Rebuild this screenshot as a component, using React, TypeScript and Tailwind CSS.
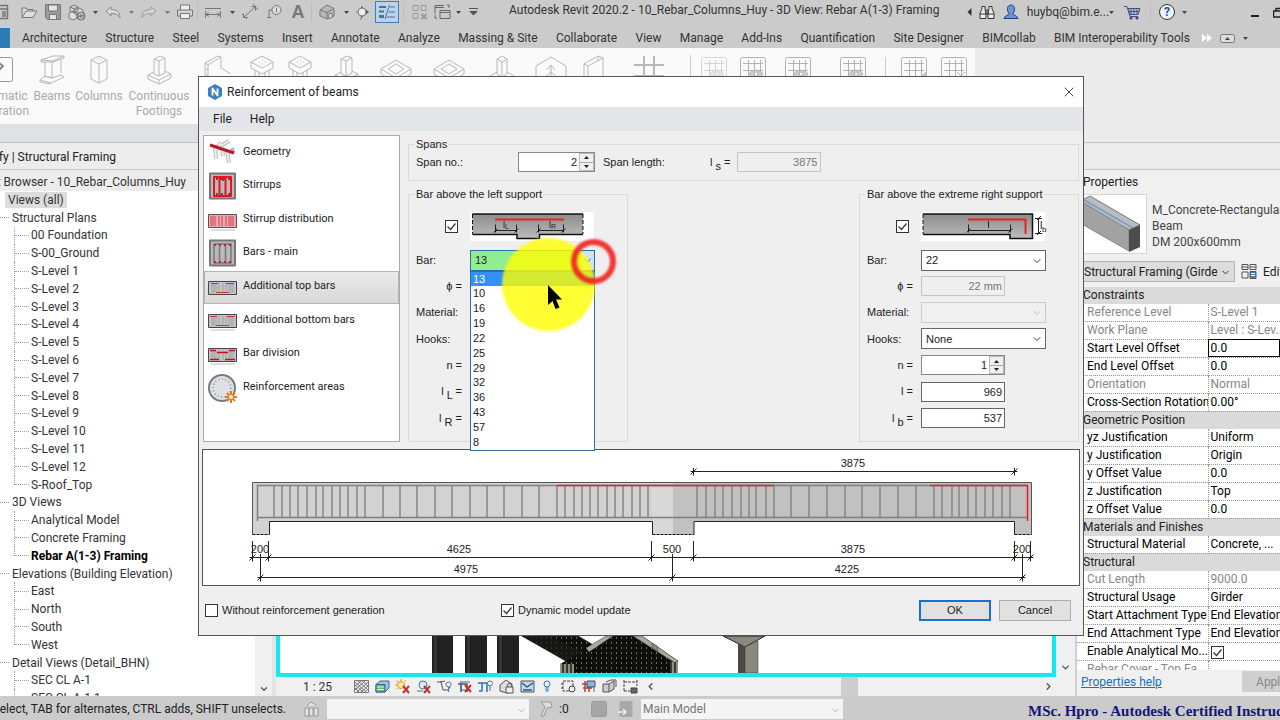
import React, { useState } from "react";
import { ChevronDown, ChevronLeft, ChevronRight, X } from "lucide-react";

type Child = { children?: React.ReactNode };

/* ---------- small shared pieces ---------- */

const Icon = ({
  w = 20,
  h = 20,
  stroke = "#777",
  children,
}: { w?: number; h?: number; stroke?: string } & Child) => (
  <svg
    width={w}
    height={h}
    viewBox={`0 0 ${w} ${h}`}
    fill="none"
    stroke={stroke}
    strokeLinejoin="round"
    className="shrink-0"
    aria-hidden="true"
  >
    {children}
  </svg>
);

const Caret = ({ className = "text-[#444]" }: { className?: string }) => (
  <svg width="5" height="3" viewBox="0 0 5 3" className={className} aria-hidden="true">
    <path d="M0 0h5L2.5 3z" fill="currentColor" />
  </svg>
);

const Slot = ({ w, label, children }: { w: string; label: string } & Child) => (
  <button aria-label={label} className={`flex h-full shrink-0 items-center justify-center ${w}`}>
    {children}
  </button>
);

const Divider = () => <span className="h-5 w-px shrink-0 bg-[#bdbdbd]" />;

/* ---------- title bar ---------- */

const TitleBar = () => (
  <header className="flex h-6 shrink-0 items-center bg-[#cbcbcb]">
    <div className="flex h-full shrink-0 items-center">
      <Slot w="w-[17px]" label="Home">
        <Icon w={17} h={16}>
          <path d="M0 1.5h7.5v13H0M0 5h7M2 8h4M2 10h4M2 12h4" strokeWidth="1.5" />
        </Icon>
      </Slot>
      <Slot w="w-6" label="Open">
        <Icon w={18} h={14}>
          <path d="M2 12V3h4l1 1.5h6V6M2 12.500 6 6h11l-4 6.500z" fill="#ddd" />
        </Icon>
      </Slot>
      <Slot w="w-6" label="Save">
        <Icon w={16} h={16}>
          <path d="M.5.5h15v15H2.500l-2-2z" fill="#9a9a9a" />
          <path d="M3.500 1h9v6h-9zM4.500 10.500h7v5h-7z" fill="#e4e4e4" />
        </Icon>
      </Slot>
      <Slot w="w-6" label="Synchronize">
        <Icon w={18} h={17} stroke="#777">
          <path d="m6 1 4 2v4L6 9 2 7V3zM2 3l4 2 4-2M6 5v4M5 7l4 2v5l-4 2-4-2V9zM11 4l4 2v4l-4 2-4-2V6z" fill="#ddd" />
          <circle cx="13" cy="12" r="4" fill="#888" />
          <path d="M11 11.500a2 2 0 0 1 4-.5M15 12.500a2 2 0 0 1-4 .5" stroke="#ddd" />
        </Icon>
      </Slot>
      <Slot w="w-3" label="Synchronize options"><Caret /></Slot>
      <Slot w="w-6" label="Undo">
        <Icon w={16} h={13} stroke="#888">
          <path d="M1 5 6 .8V3.500c5 0 9 2 9 8-2-3-4.500-4-9-4v2.500z" fill="#dadada" />
        </Icon>
      </Slot>
      <Slot w="w-3" label="Undo options"><Caret className="text-[#777]" /></Slot>
      <Slot w="w-6" label="Redo">
        <Icon w={16} h={13} stroke="#999">
          <path d="m15 5-5-4.200v2.700c-5 0-9 2-9 8 2-3 4.500-4 9-4v2.500z" fill="#d4d4d4" />
        </Icon>
      </Slot>
      <Slot w="w-3" label="Redo options"><Caret className="text-[#777]" /></Slot>
      <Slot w="w-6" label="Print">
        <Icon w={18} h={16}>
          <path d="M4.500 6V1h9v5" fill="#eee" />
          <path d="M1.500 6h15v6h-15z" fill="#d2d2d2" />
          <path d="M4.500 9.500h9v5h-9z" fill="#eee" />
        </Icon>
      </Slot>
      <Divider />
      <Slot w="w-[30px]" label="Measure">
        <Icon w={16} h={12}>
          <path d="M0 2.500h16M1 8.500h14M.5 5v7M15.500 5v7M1 8.500l3-2M1 8.500l3 2M15 8.500l-3-2M15 8.500l-3 2" />
        </Icon>
      </Slot>
      <Slot w="w-2" label="Measure options"><Caret /></Slot>
      <Slot w="w-[27px]" label="Aligned dimension">
        <Icon w={16} h={16}>
          <path d="M2 13 13 3M1.500 9.500v4h4M9.500 2.500h4v4M0 10l5 5M11 0l5 6" />
        </Icon>
      </Slot>
      <Slot w="w-[22px]" label="Tag by category">
        <Icon w={16} h={14}>
          <circle cx="10.500" cy="5" r="4.500" fill="#ddd" />
          <path d="M10.500 2.500v5M6 5H3v7M1 12.500h4" />
        </Icon>
      </Slot>
      <Slot w="w-[26px]" label="Text">
        <span className="[font-family:'Liberation_Sans',sans-serif] text-lg font-bold leading-none text-[#777]">A</span>
      </Slot>
      <Divider />
      <Slot w="w-[30px]" label="Default 3D view">
        <Icon w={16} h={16}>
          <path d="M1 6 8 1l7 3.500V12l-7 3-7-3z" fill="#b8b8b8" />
          <path d="m1 6 7 2.500L15 4.500M8 8.500V15" />
          <path d="M10 9.500h3v4l-3 1z" fill="#eee" />
        </Icon>
      </Slot>
      <Slot w="w-2" label="3D view options"><Caret /></Slot>
      <Slot w="w-[25px]" label="Section">
        <Icon w={14} h={15}>
          <path d="M5 1 13 7 5 13z" fill="#555" stroke="none" />
          <circle cx="6" cy="7" r="4" fill="#eee" />
          <path d="M5 12v3M2 7H0" />
        </Icon>
      </Slot>
      <button aria-label="Thin lines" className="flex h-[22px] w-6 shrink-0 items-center justify-center border border-[#3f7db8] bg-[#b5d4f1]">
        <Icon w={18} h={16} stroke="#5a6f83">
          <path d="M1 3h7M1 7.500h5" strokeWidth="2" />
          <path d="M1 12.500h5" strokeWidth="3" />
          <path d="M12 3h5M10.500 8H17M8.500 13H17M11.500 1 7 15" />
        </Icon>
      </button>
      <Slot w="w-[9px]" label="Divider"><Divider /></Slot>
      <Slot w="w-[23px]" label="Close inactive views">
        <Icon w={16} h={16} stroke="#999">
          <path d="M1 1.500h5v5H1zM9 1.500h5v5H9zM1 9.500h5v5H1z" />
          <path d="m9.500 10 5 5M14.500 10l-5 5" strokeWidth="2" />
        </Icon>
      </Slot>
      <Slot w="w-[22px]" label="Switch windows">
        <Icon w={17} h={16} stroke="#666">
          <path d="M1 9.500v-8h9M1 3.500h9M6 6.500h10v8H6zM6 8.500h10M13 1h2v3M1 11v3h2" />
        </Icon>
      </Slot>
      <Slot w="w-2.5" label="Window options"><Caret /></Slot>
      <Slot w="w-5" label="Customize toolbar">
        <Icon w={9} h={8} stroke="#555">
          <path d="M0 .5h9" />
          <path d="M0 3h9L4.500 7.500z" fill="#555" stroke="none" />
        </Icon>
      </Slot>
    </div>
    <h1 className="mb-1 flex-1 whitespace-nowrap pl-[26px] text-[12px] leading-5 text-[#333]">
      Autodesk Revit 2020.2 - 10_Rebar_Columns_Huy - 3D View: Rebar A(1-3) Framing
    </h1>
    <div className="flex h-full w-[317px] shrink-0 items-center overflow-hidden">
      <Slot w="w-3" label="Collapse search">
        <Icon w={5} h={8}><path d="M4.500 0v8L.5 4z" fill="#333" stroke="none" /></Icon>
      </Slot>
      <Slot w="w-6" label="Search">
        <Icon w={16} h={15} stroke="#333">
          <path d="M3 1.500h3v3L7 8v5.500H1V8l2-4zM10 1.500h3V4l2 4v5.500H9V8l1-3.500zM7 5h2v4H7zM1 9h6M9 9h6" fill="#eee" />
        </Icon>
      </Slot>
      <button className="flex h-full w-[115px] shrink-0 items-center text-[12px] text-[#333]">
        <span className="flex w-6 justify-center">
          <Icon w={16} h={16} stroke="#26427c">
            <path d="M8 1c5 0 4 7 1.500 9 .5 1 5 1.500 5.500 4.500H1C1.500 11.500 6 11 6.500 10 4 8 3 1 8 1z" fill="#6d93dc" />
          </Icon>
        </span>
        <span className="ml-1 mr-auto">huybq@bim.e...</span>
        <Caret />
      </button>
      <Slot w="w-9" label="Store">
        <Icon w={17} h={15} stroke="#45527c">
          <path d="M4 3.500h12l-2 6H6z" fill="#b9c4e4" />
          <path d="M0 1.500h3l3 10h8M7 4v5M10 4v5M13 4v5M5 6.500h10" />
          <circle cx="7" cy="13" r="1.200" fill="#45527c" />
          <circle cx="13" cy="13" r="1.200" fill="#45527c" />
        </Icon>
      </Slot>
      <Divider />
      <button aria-label="Help" className="ml-2 flex size-4 shrink-0 items-center justify-center rounded-full border border-[#333] bg-[#eef3fb] text-[12px] font-bold leading-none text-[#1d4fa0]">
        ?
      </button>
      <Slot w="w-[18px]" label="Help options"><Caret /></Slot>
      <Slot w="ml-[50px] w-6" label="Minimize"><span className="mt-2 h-0.5 w-2 bg-[#222]" /></Slot>
      <Slot w="w-6" label="Restore">
        <Icon w={12} h={11} stroke="#222">
          <path d="M3 4V1.500h8v6H9M.5 4h8v6h-8z" strokeWidth="1.5" />
        </Icon>
      </Slot>
    </div>
  </header>
);

/* ---------- ribbon ---------- */

const TABS = [
  "Architecture",
  "Structure",
  "Steel",
  "Systems",
  "Insert",
  "Annotate",
  "Analyze",
  "Massing & Site",
  "Collaborate",
  "View",
  "Manage",
  "Add-Ins",
  "Quantification",
  "Site Designer",
  "BIMcollab",
  "BIM Interoperability Tools",
];

const RibbonTabs = () => (
  <nav className="flex h-6 shrink-0 items-center bg-[#cbcbcb] text-[12px] text-[#333]">
    <button aria-label="File" className="mt-1 h-5 w-2.5 shrink-0 bg-[#2b7cb6]" />
    <div className="flex w-[1180px] shrink-0 justify-between whitespace-nowrap pl-3 pt-1">
      {TABS.map((tab) => (
        <button key={tab}>{tab}</button>
      ))}
    </div>
    <span className="ml-3 flex items-center gap-2 pt-1">
      <Icon w={10} h={8}><path d="M0 0l5 4-5 4zM5 0l5 4-5 4z" fill="#fff" stroke="none" /></Icon>
      <Icon w={15} h={9}>
        <rect x=".5" y=".5" width="14" height="8" rx="2" fill="#ddd" />
        <path d="M5 6h5L7.500 3z" fill="#444" stroke="none" />
      </Icon>
      <Caret />
    </span>
  </nav>
);

const GridGlyph = ({ extra }: { extra: string }) => (
  <Icon w={26} h={28} stroke="#b2b2b2">
    <rect x=".5" y=".5" width="25" height="25" rx="2" />
    <path d="M3 6.500h20M3 13.500h20M8.500 3v19M14.500 3v19M20.500 3v19" />
    <path d={extra} fill="#ccc" />
  </Icon>
);

const EYE = "M9 17c3-5 11-5 14 0-3 5-11 5-14 0zM14 17a2 2 0 1 0 4 0 2 2 0 1 0-4 0";

const GLYPHS: Record<string, React.ReactNode> = {
  auto: (
    <>
      <rect x=".5" y="2.500" width="25" height="24" rx="2" stroke="#999" />
      <path d="m12 8 4 3-4 4" stroke="#888" strokeWidth="2" />
    </>
  ),
  beam: <path d="M2 5 14 1l11 0-11 5zM2 5v2l12 0V6M25 1v2l-11 4M6 7v14l7 2V7M22 5v13M1 25l11 3 13-6-3-2-9 3-7-2zM1 25v2l11 2" />,
  column: <path d="M5 5 13 1l8 4v19l-8 4-8-4zM5 5l8 4 8-4M13 9v19M11 4h1M14 5h1M13 3h1" />,
  footing: <path d="m8 4 6-3 5 2v15l-6 3-5-2zM8 4l5 2v15M13 6l6-3M2 20l6-3M2 20v4l11 5 12-6v-4l-6-3M2 20l11 5 12-6M13 25v4" />,
  wall: <path d="M1 8 14 1l3 1v11l10 6M1 8v18M1 8l3 2M4 10v18M4 10 17 2M2 14h2M2 20h2" />,
  cap: <path d="M2 7 13 1l11 6-11 6zM2 7v6l11 6 11-6V7M6 15v12M10 17v11M16 17v11M20 15v12M10 7h1M13 5h1M13 9h1M16 7h1" />,
  slab: <path d="m-2 14 15-9 15 9-15 9zM-2 14v5l15 9 15-9v-5M5 14l8-5 8 5-8 5z" />,
  stump: <path d="m8 4 5-3 5 3v15l-5 3-5-3zM8 4l5 3 5-3M13 7v15M1 21l7-4M18 17l7 4v6M1 21v6M1 21l12 7 12-7" />,
  cut: <path d="M-2 28V11l15-9 15 9v17M13 10v18M13 10l-4 5M13 10l4 5M5 24l8-7 8 7" />,
  panel: <path d="M3 28V9L17 1l5 2v25M7 28V11L22 3M3 9l4 2M17 1v4" />,
  hash: <path d="M-2 10h30M-2 21h30M8 1v27M18 1v27" strokeWidth="2" />,
};

const TOOLS = [
  { name: "auto", lines: ["Automatic", "Generation"], w: "-ml-[30px] w-[60px]" },
  { name: "beam", lines: ["Beams"], w: "w-11" },
  { name: "column", lines: ["Columns"], w: "w-[50px]" },
  { name: "footing", lines: ["Continuous", "Footings"], w: "w-[70px]" },
  { name: "wall", lines: [], w: "w-[46px]" },
  { name: "cap", lines: [], w: "w-11" },
  { name: "cap", lines: [], w: "w-8" },
  { name: "footing", lines: [], w: "w-[60px]" },
  { name: "slab", lines: [], w: "w-10" },
  { name: "slab", lines: [], w: "w-[66px]" },
  { name: "stump", lines: [], w: "w-10" },
  { name: "cut", lines: [], w: "w-[58px]" },
  { name: "panel", lines: [], w: "w-7" },
  { name: "hash", lines: [], w: "w-[82px]" },
];

const Ribbon = () => (
  <div className="flex h-[94px] shrink-0 flex-col bg-[#ebebeb]">
    <div className="flex h-[76px] w-[975px] items-start overflow-hidden bg-[#fafafa] pt-[7px] text-[12px] leading-[15px] text-[#aaa]">
      {TOOLS.map((tool, i) => (
        <button key={i} aria-label={tool.name} className={`flex shrink-0 flex-col items-center ${tool.w}`}>
          <span className="mb-1 h-[30px]">
            <svg width="26" height="30" viewBox="0 0 26 30" fill="none" stroke="#b8b8b8" strokeLinejoin="round" className="overflow-visible">
              {GLYPHS[tool.name]}
            </svg>
          </span>
          {tool.lines.map((line) => (
            <span key={line}>{line}</span>
          ))}
        </button>
      ))}
      <span className="h-10 w-px shrink-0 bg-[#ccc]" />
      <span className="flex shrink-0 pt-0.5">
        <span className="flex w-[46px] justify-center opacity-50"><GridGlyph extra={EYE} /></span>
        <span className="flex w-8 justify-center"><GridGlyph extra={EYE} /></span>
        <span className="flex w-[58px] justify-center"><GridGlyph extra={EYE} /></span>
        <span className="flex w-[52px] justify-center"><GridGlyph extra={EYE} /></span>
        <span className="ml-1.5 mr-2 h-10 w-px bg-[#ccc]" />
        <span className="flex w-10 justify-center"><GridGlyph extra="m18 22 8-8v3l-6 6z" /></span>
        <span className="flex w-10 justify-center"><GridGlyph extra="m16 15 8 8M24 15l-8 8" /></span>
      </span>
    </div>
    <div className="h-[18px] w-[975px] bg-[#dfe1e4]" />
  </div>
);

const ContextBar = () => (
  <div className="flex h-7 shrink-0 items-center border-y border-[#c4c4c4] bg-[#ececec] pt-0.5">
    <div className="flex w-[116px] justify-end overflow-hidden whitespace-nowrap text-[12px] text-[#222]">
      Modify | Structural Framing
    </div>
  </div>
);

/* ---------- project browser ---------- */

const TREE = [
  {
    name: "Structural Plans",
    items: [
      "00 Foundation",
      "S-00_Ground",
      "S-Level 1",
      "S-Level 2",
      "S-Level 3",
      "S-Level 4",
      "S-Level 5",
      "S-Level 6",
      "S-Level 7",
      "S-Level 8",
      "S-Level 9",
      "S-Level 10",
      "S-Level 11",
      "S-Level 12",
      "S-Roof_Top",
    ],
  },
  { name: "3D Views", items: ["Analytical Model", "Concrete Framing", "Rebar A(1-3) Framing"] },
  { name: "Elevations (Building Elevation)", items: ["East", "North", "South", "West"] },
  { name: "Detail Views (Detail_BHN)", items: ["SEC CL A-1", "SEC CL A-1.1"] },
];

const TreeItem = ({ name, last }: { name: string; last: boolean }) => (
  <li className="flex items-center">
    <span className={`ml-3.5 w-px border-l border-dotted border-gray-400 ${last ? "h-1/2 self-start" : "h-full"}`} />
    <span className="mr-0.5 w-3.5 border-t border-dotted border-gray-400" />
    <span className={name.startsWith("Rebar") ? "font-bold text-black" : ""}>{name}</span>
  </li>
);

const ProjectBrowser = () => (
  <aside className="flex w-[272px] shrink-0 flex-col overflow-hidden bg-white text-[12px] text-[#333]">
    <div className="flex h-[21px] shrink-0 items-center bg-[#ececec] pt-0.5">
      <h2 className="flex w-[186px] justify-end overflow-hidden whitespace-nowrap">
        Project Browser - 10_Rebar_Columns_Huy
      </h2>
    </div>
    <div className="flex min-h-0 flex-1">
      <ul className="grid h-[516px] flex-1 auto-rows-fr whitespace-nowrap leading-4">
        <li className="flex items-center">
          <span className="ml-[5px] bg-[#dcdcdc] px-[3px]">Views (all)</span>
        </li>
        {TREE.map((group) => (
          <React.Fragment key={group.name}>
            <li className="flex items-center">
              <span className="mr-[3px] w-[9px] border-t border-dotted border-gray-400" />
              {group.name}
            </li>
            {group.items.map((item, i) => (
              <TreeItem key={item} name={item} last={group.name !== "Detail Views (Detail_BHN)" && i === group.items.length - 1} />
            ))}
          </React.Fragment>
        ))}
      </ul>
      <div className="flex w-[17px] items-end justify-center bg-[#f0f0f0] pb-0.5">
        <ChevronDown size={10} strokeWidth={3} className="text-[#555]" />
      </div>
    </div>
  </aside>
);

/* ---------- drawing area ---------- */

const Model = () => (
  <svg width="360" height="60" viewBox="0 -23 360 60" className="ml-[150px] shrink-0" aria-hidden="true">
    <defs>
      <pattern id="bars" width="5" height="5" patternUnits="userSpaceOnUse">
        <rect width="5" height="5" fill="#0e0e0a" />
        <path d="M1 1h1v2H1z" fill="#6c6c60" />
      </pattern>
      <pattern id="ribs" width="4" height="4" patternUnits="userSpaceOnUse">
        <rect width="4" height="4" fill="#8f8f84" />
        <rect width="2" height="4" fill="#3a3a34" />
      </pattern>
    </defs>
    <path d="M2-20h21v57H2zM35-20h22v57H35zM67-20h22v57H67z" fill="#222" />
    <path d="M4-20h3v57H4zM37-20h3v57h-3zM69-20h3v57h-3z" fill="#363636" />
    <path d="M92 0h56l20 12-26 16z" fill="url(#bars)" stroke="#222" />
    <path d="m118 0 40 18-18 10L92 0z" fill="#1b1b17" opacity=".7" />
    <path d="m130 28 52-28h30l36 25v12H130z" fill="url(#bars)" />
    <path d="m156 12 20-12h7l-24 16zM212 0l36 25-3 2-42-27z" fill="#aaa99c" stroke="#333" strokeWidth=".5" />
    <path d="m222 7 5 3 1 6-6-4z" fill="#888" stroke="#333" strokeWidth=".5" />
    <path d="M130 28h14v9h-14zM240 26h8v11h-8z" fill="url(#ribs)" />
    <path d="M293 0h42l-20 11z" fill="#8a897d" stroke="#222" />
    <path d="M308 7l7 4v26h-7z" fill="#4b4a42" />
    <path d="M315 11l13-6v32h-13z" fill="#8a897d" stroke="#333" strokeWidth=".5" />
  </svg>
);

const VIEW_ICONS: React.ReactNode[] = [
  <path d="M.5 1.500h14v12H.5zM1 3l11 10M4 2l10 9M1 6l8 7M1 9l4 4M8 2l6 5M14 3 3 13M11 2 1 11M14 7l-7 6M14 10l-3 3M7 2 1 7" stroke="#777" />,
  <>
    <path d="M1 5.500 5 2h9v7l-4 4H1z" fill="#9fc3e8" stroke="#3c6690" />
    <path d="M1 5.500h9V13H1z" fill="#63b57a" stroke="#3c6690" />
    <path d="M2 8h7M2 10.500h7" stroke="#e8f2fb" />
  </>,
  <>
    <circle cx="6" cy="6" r="3.500" fill="#ffe9a0" stroke="#d49a1d" />
    <path d="M6 0v2M0 6h2M1.500 1.500 3 3M11 1 9.500 2.500M2 10.500 3.500 9" stroke="#d49a1d" />
    <path d="m8 7 6 7M14 7l-6 7" stroke="#c9302c" strokeWidth="2" />
  </>,
  <>
    <circle cx="7" cy="6" r="4" fill="#dcebf8" stroke="#3b7ab3" />
    <path d="M1 12h6" stroke="#666" />
    <path d="m8 7 6 7M14 7l-6 7" stroke="#c9302c" strokeWidth="2" />
  </>,
  <>
    <path d="M0 3h4l2 8h5l2-3M3 3l5-1" stroke="#555" />
    <circle cx="11.500" cy="5.500" r="2.500" fill="#fff" stroke="#3b7ab3" />
    <path d="M11.500 8v5" stroke="#3b7ab3" />
  </>,
  <>
    <path d="M4 5v8M1 5h9v8" stroke="#555" strokeWidth="1.5" />
    <path d="M4 3v8h9M3 3h10" stroke="#2f6fb0" />
    <path d="m8 6 6 7M14 6l-6 7" stroke="#c9302c" strokeWidth="2" />
  </>,
  <>
    <path d="M4 4v8H1M0 4h9v9" stroke="#2f6fb0" strokeWidth="1.5" />
    <circle cx="12" cy="4.500" r="2.500" fill="#fff" stroke="#3b7ab3" />
    <path d="M12 7v5" stroke="#3b7ab3" />
  </>,
  <>
    <path d="M1 6 7 1l6 4v8l-5 1-7-2z" fill="#ddd" stroke="#555" />
    <rect x="7" y="8" width="7" height="6" fill="#eee" stroke="#555" />
    <path d="M8.500 8V6.500a2 2 0 0 1 4 0V8" stroke="#555" />
  </>,
  <>
    <path d="M1 2h13v11H1z" fill="#c2daf0" stroke="#555" />
    <path d="M2 4l5 4 6-4M3 11h9" stroke="#2b5986" strokeWidth="1.500" />
  </>,
  <>
    <circle cx="7" cy="5" r="3" fill="#e6f1fb" stroke="#3b7ab3" />
    <path d="M6 8v4h2V8" stroke="#3b7ab3" />
  </>,
  <>
    <path d="M2 2h10v10H2zM2 5h-2M2 9h-2" strokeDasharray="3 1" stroke="#444" />
    <circle cx="11" cy="10" r="3" fill="#eee" stroke="#444" />
  </>,
  <>
    <path d="M0 5h11M1 9h9M3 2v11M7 2v11" stroke="#b4423e" strokeWidth="1.5" />
    <path d="M5 2h8v6H5z" fill="#8ab2dc" stroke="#456" />
    <path d="M12 8v5" stroke="#3b7ab3" />
  </>,
  <>
    <path d="M1 5h6v8H1zM7 5l5-3v8l-5 3" fill="#ccc" stroke="#555" />
    <path d="M4 3l5-2h5v7" stroke="#555" />
  </>,
  <>
    <path d="M1 1v12M14 1v6M1 3h13M1 12h6" strokeDasharray="3 1" stroke="#444" />
    <rect x="8" y="9" width="6" height="5" fill="#666" stroke="#444" />
  </>,
];

const DrawingArea = () => (
  <main className="flex min-w-0 flex-1 flex-col border-l-[4px] border-[#e3e3e3] bg-[#f0f0f0]">
    <div className="flex min-h-0 flex-1">
      <div className="flex flex-1 items-end overflow-hidden border-4 border-[#16e8f2] bg-white">
        <Model />
      </div>
      <div className="flex w-[19px] items-end justify-center pb-1">
        <ChevronDown size={11} strokeWidth={3} className="text-[#555]" />
      </div>
    </div>
    <div className="flex h-[19px] shrink-0 items-center text-[12px] text-[#333]">
      <span className="ml-[27px] w-[51px]">1 : 25</span>
      <div className="flex w-[285px] justify-between">
        {VIEW_ICONS.map((icon, i) => (
          <button key={i} aria-label={`View control ${i + 1}`}>
            <Icon w={16} h={15}>{icon}</Icon>
          </button>
        ))}
      </div>
      <ChevronLeft size={11} strokeWidth={3} className="ml-1.5 text-[#555]" />
      <div className="flex flex-1 justify-center self-stretch">
        <span className="w-[17px] bg-[#cdcdcd]" />
      </div>
      <ChevronRight size={11} strokeWidth={3} className="mr-[21px] text-[#555]" />
    </div>
  </main>
);

/* ---------- properties palette ---------- */

type Prop = [string, string, boolean?];

const PROPS: { group: string; rows: Prop[] }[] = [
  {
    group: "Constraints",
    rows: [
      ["Reference Level", "S-Level 1", true],
      ["Work Plane", "Level : S-Lev...", true],
      ["Start Level Offset", "0.0"],
      ["End Level Offset", "0.0"],
      ["Orientation", "Normal", true],
      ["Cross-Section Rotation", "0.00°"],
    ],
  },
  {
    group: "Geometric Position",
    rows: [
      ["yz Justification", "Uniform"],
      ["y Justification", "Origin"],
      ["y Offset Value", "0.0"],
      ["z Justification", "Top"],
      ["z Offset Value", "0.0"],
    ],
  },
  { group: "Materials and Finishes", rows: [["Structural Material", "Concrete, ..."]] },
  {
    group: "Structural",
    rows: [
      ["Cut Length", "9000.0", true],
      ["Structural Usage", "Girder"],
      ["Start Attachment Type", "End Elevation"],
      ["End Attachment Type", "End Elevation"],
      ["Enable Analytical Mo...", "check"],
      ["Rebar Cover - Top Fa...", "", true],
    ],
  },
];

const PropertiesPalette = () => (
  <aside className="flex w-[205px] shrink-0 flex-col overflow-hidden border-l-2 border-[#d0d0d0] bg-[#f0f0f0] text-[12px] text-[#222]">
    <h2 className="h-6 shrink-0 pl-1.5 pt-1 leading-4">Properties</h2>
    <div className="flex h-[62px] shrink-0">
      <div className="h-[60px] w-[70px] shrink-0 border border-[#d5d5d5] bg-white">
        <svg width="68" height="58" viewBox="0 0 68 58" aria-hidden="true">
          <path d="M2 6 12 1l50 29-11 5z" fill="#b9bcc0" stroke="#777" />
          <path d="m6 5 49 28" stroke="#7f9fc4" strokeWidth="2" />
          <path d="M2 6v22l49 28V35z" fill="#a2a2a2" stroke="#888" />
          <path d="m51 35 11-5v22l-11 5z" fill="#4c4c4c" />
        </svg>
      </div>
      <p className="ml-[5px] mt-2 whitespace-nowrap leading-4 text-[#444]">
        M_Concrete-Rectangular
        <br />
        Beam
        <br />
        DM 200x600mm
      </p>
    </div>
    <div className="flex h-[31px] shrink-0 items-center">
      <div className="relative h-[21px] w-[158px] shrink-0">
        <select aria-label="Type filter" className="h-full w-full appearance-none border border-[#b5b5b5] bg-[#dcdcdc] pl-1.5 pr-4">
          <option>Structural Framing (Girder)</option>
        </select>
        <ChevronDown size={11} className="pointer-events-none absolute right-1 top-1.5" />
      </div>
      <button className="ml-1.5 flex items-center gap-1.5 whitespace-nowrap">
        <Icon w={16} h={15} stroke="#555">
          <path d="M1 .5h6v5H1zM9 .5h6v5H9zM1 8h6v6H1zM1 3h6M9 3h6" />
          <path d="M9 7.500h6v7H9z" fill="#4a7fb8" />
          <path d="M10 9.500h4M10 11.500h4" stroke="#fff" />
        </Icon>
        Edit Type
      </button>
    </div>
    <div className="min-h-0 flex-1 overflow-hidden">
      <table className="h-[392px] w-full table-fixed border-collapse whitespace-nowrap leading-4">
        <colgroup>
          <col className="w-[131px]" />
          <col />
        </colgroup>
        <tbody>
          {PROPS.map(({ group, rows }) => (
            <React.Fragment key={group}>
              <tr className="bg-[#dadada]">
                <th colSpan={2} className="p-0 pl-1.5 text-left font-normal">{group}</th>
              </tr>
              {rows.map(([name, value, muted]) => (
                <tr key={name} className={`border-b border-dotted border-[#999] bg-white ${muted ? "text-[#888]" : "text-black"}`}>
                  <th className="overflow-hidden border-r border-dotted border-[#999] p-0 pl-2.5 text-left font-normal">{name}</th>
                  <td className={`p-0 pl-0.5 ${name === "Start Level Offset" ? "outline -outline-offset-1 outline-black" : ""}`}>
                    {value === "check" ? (
                      <input type="checkbox" aria-label={name} defaultChecked className={`mt-0.5 block ${CHECKBOX}`} style={{ backgroundImage: TICK }} />
                    ) : (
                      value
                    )}
                  </td>
                </tr>
              ))}
            </React.Fragment>
          ))}
        </tbody>
      </table>
    </div>
    <div className="flex h-[26px] shrink-0 items-start justify-between bg-[#f0f0f0] pl-1">
      <a href="#help" className="leading-6 text-[#1c6fb5] underline">Properties help</a>
      <button className="-mr-5 mt-px h-[21px] w-[58px] shrink-0 bg-[#cfcfcf] text-[#888]">Apply</button>
    </div>
  </aside>
);

/* ---------- status bar ---------- */

const StatusBar = () => (
  <footer className="flex h-6 shrink-0 items-center overflow-hidden bg-[#cbcbcb] pt-0.5 text-[12px] text-[#222]">
    <div className="flex w-[286px] shrink-0 justify-end overflow-hidden whitespace-nowrap">
      Click to select, TAB for alternates, CTRL adds, SHIFT unselects.
    </div>
    <span className="ml-[17px]">
      <Icon w={17} h={16} stroke="#999">
        <path d="M2 7h4v8H2zM6 7h4v8H6zM11 7h4v8h-4zM4 5l4-4 5 3" fill="#e5e5e5" />
      </Icon>
    </span>
    <div className="relative ml-[7px] h-5 w-[202px] shrink-0">
      <select aria-label="Workset" className="h-full w-full appearance-none bg-[#f4f4f4]"><option></option></select>
      <ChevronDown size={11} className="pointer-events-none absolute right-0.5 top-1.5 text-[#aaa]" />
    </div>
    <span className="ml-2.5 mr-1.5">
      <Icon w={14} h={16} stroke="#999"><path d="M2 1h10l1 5-5 1-3 8H2l4-9z" fill="#ddd" /></Icon>
    </span>
    <span className="w-3">:0</span>
    <span className="ml-5 flex gap-2.5">
      <Icon w={16} h={16} stroke="#999"><rect x=".5" y=".5" width="15" height="15" rx="2" fill="#a5a5a5" /></Icon>
      <Icon w={16} h={16} stroke="#aaa">
        <path d="M3 .5h12v15H3z" fill="#a8a8a8" />
        <path d="M1 11h8M6 8l3 3-3 3" stroke="#eee" strokeWidth="1.5" />
      </Icon>
    </span>
    <div className="relative ml-2 h-5 w-[202px] shrink-0">
      <select aria-label="Design option" className="h-full w-full appearance-none bg-[#f4f4f4] pl-0.5 text-[#777]">
        <option>Main Model</option>
      </select>
      <ChevronDown size={11} className="pointer-events-none absolute right-0.5 top-1.5 text-[#aaa]" />
    </div>
    <strong className="ml-auto w-[252px] whitespace-nowrap pt-1 [font-family:'Liberation_Serif',serif] text-[15px] leading-none text-[#14147a]">
      MSc. Hpro - Autodesk Certified Instructor
    </strong>
  </footer>
);

/* ---------- dialog ---------- */

const TICK = `url("data:image/svg+xml,%3Csvg xmlns='http://www.w3.org/2000/svg' viewBox='0 0 11 11'%3E%3Cpath d='M1.5 5.5l3 3 5-6' fill='none' stroke='%23333' stroke-width='1.2'/%3E%3C/svg%3E")`;
const CHECKBOX = "size-[13px] shrink-0 appearance-none border border-[#333] bg-white bg-center bg-no-repeat";

const Check = ({ id, label, on }: { id: string; label?: string; on: boolean }) => {
  const [checked, setChecked] = useState(on);
  return (
    <input
      id={id}
      type="checkbox"
      aria-label={label}
      checked={checked}
      onChange={(e) => setChecked(e.target.checked)}
      className={CHECKBOX}
      style={{ backgroundImage: checked ? TICK : "none" }}
    />
  );
};

const barPath = (
  <>
    <path d="M4 26h24" stroke="#ddd" strokeWidth="2" />
    <rect x="1.500" y="10.500" width="28" height="13" fill="#c4c4c4" stroke="#444" />
    <path d="M5 12v10M7 12v10M9 12v10M12 12v10M16 12v10M19 12v10M22 12v10M24 12v10M26 12v10" stroke="#a2a2a2" />
  </>
);

const boxFrame = <rect x="3" y="3.500" width="25" height="25" fill="#b9b9b9" stroke="#777" strokeWidth="2" />;

const PAGES: { name: string; art: React.ReactNode }[] = [
  {
    name: "Geometry",
    art: (
      <>
        <path d="M8 9l1 14M14 6l-4 8M22 5l-8 5M20 14l2 13M25 12l1 5M15 12l1 8" stroke="#bbb" strokeWidth="4" />
        <path d="M8 9l1 14M14 6l-4 8M22 5l-8 5M20 14l2 13M15 12l1 8" stroke="#eee" strokeWidth="2" />
        <path d="m3 9 24 8" stroke="#c01622" strokeWidth="3" />
      </>
    ),
  },
  {
    name: "Stirrups",
    art: (
      <>
        {boxFrame}
        <path d="M7 7h17v19H7zM12.500 7v19M18.500 7v19M12 9h7" stroke="#ee1020" strokeWidth="2" />
        <path d="M9 9h2M15 10h2M21 9h2M9 24h2M14 24h2M21 24h2" stroke="#555" strokeWidth="2" />
      </>
    ),
  },
  {
    name: "Stirrup distribution",
    art: (
      <>
        <path d="M4 26h24" stroke="#ddd" strokeWidth="2" />
        <rect x="1.500" y="10.500" width="28" height="13" fill="#efa6ac" stroke="#555" />
        <path d="M4 12v10M6 12v10M8 12v10M12 12v10M15 12v10M19 12v10M22 12v10M24 12v10M26 12v10" stroke="#cf4553" />
      </>
    ),
  },
  {
    name: "Bars - main",
    art: (
      <>
        {boxFrame}
        <path d="M7 7h17v19H7zM12.500 7v19M18.500 7v19" stroke="#777" strokeWidth="1.5" />
        <path d="M7 8h2M12 8h2M17 8h2M22 8h2M7 25h2M12 25h2M17 25h2M22 25h2" stroke="#c22" strokeWidth="2" />
      </>
    ),
  },
  { name: "Additional top bars", art: <>{barPath}<path d="M4 12.500h7M19 12.500h8M9 21.500h13" stroke="#c0392b" /></> },
  { name: "Additional bottom bars", art: <>{barPath}<path d="M3 12.500h7M20 12.500h8M9 21.500h13" stroke="#d0303a" /></> },
  {
    name: "Bar division",
    art: <>{barPath}<path d="M3 12.500h6M22 12.500h6M10 14.500h11M3 21.500h9M18 21.500h10" stroke="#c0101a" strokeWidth="1.5" /></>,
  },
  {
    name: "Reinforcement areas",
    art: (
      <>
        <circle cx="15" cy="16" r="13" fill="#dde0e4" stroke="#777b82" strokeWidth="2" />
        <circle cx="15" cy="16" r="9" stroke="#888" strokeWidth="1.5" strokeDasharray="1 2.5" />
        <path d="M24 19v12M18 25h12M20 21l8 8M28 21l-8 8" stroke="#e07b1a" strokeWidth="2" />
        <circle cx="24" cy="25" r="2.500" fill="#fff3d0" stroke="#e07b1a" />
      </>
    ),
  },
];

const PageList = () => {
  const [active, setActive] = useState("Additional top bars");
  return (
    <nav className="w-[197px] shrink-0 border border-[#aaa] bg-white">
      <ul className="grid h-[269px] auto-rows-fr">
        {PAGES.map(({ name, art }) => (
          <li key={name}>
            <button
              onClick={() => setActive(name)}
              className={`flex h-full w-full items-center gap-1.5 border px-0.5 pb-0.5 text-[11px] text-[#222] [font-family:Roboto,sans-serif] ${
                active === name ? "border-[#b5b5b5] bg-linear-to-b from-[#e9e9e9] to-[#d9d9d9]" : "border-transparent"
              }`}
            >
              <Icon w={30} h={31}>{art}</Icon>
              {name}
            </button>
          </li>
        ))}
      </ul>
    </nav>
  );
};

const Combo = ({ id, value, disabled }: { id: string; value: string; disabled?: boolean }) => (
  <div className="relative h-[21px] w-[125px]">
    <select
      id={id}
      disabled={disabled}
      className={`h-full w-full appearance-none border pl-1 opacity-100 ${disabled ? "border-[#ccc] bg-[#f0f0f0]" : "border-[#666] bg-white"}`}
    >
      <option>{value}</option>
    </select>
    <ChevronDown
      size={12}
      className={`pointer-events-none absolute right-[3px] top-[5px] ${disabled ? "text-[#bbb]" : "text-[#444]"}`}
    />
  </div>
);

const Field = ({ id, value, disabled }: { id: string; value: string; disabled?: boolean }) => (
  <input
    id={id}
    defaultValue={value}
    disabled={disabled}
    className={`h-5 w-[84px] border px-0.5 text-right ${disabled ? "border-[#c4c4c4] bg-[#efefef] text-[#777]" : "border-[#666] bg-white text-[#222]"}`}
  />
);

const Spinner = ({ id, start, width }: { id: string; start: number; width: string }) => {
  const [value, setValue] = useState(start);
  return (
    <div className={`flex h-5 border border-[#888] bg-white ${width}`}>
      <input
        id={id}
        value={value}
        onChange={(e) => setValue(+e.target.value || 0)}
        className="min-w-0 flex-1 pr-0.5 text-right"
      />
      <div className="flex w-[15px] flex-col border border-[#bbb] bg-[#f0f0f0]">
        <button aria-label="Increase" onClick={() => setValue(value + 1)} className="flex flex-1 items-center justify-center border-b border-[#aaa]">
          <Caret className="rotate-180 text-[#222]" />
        </button>
        <button aria-label="Decrease" onClick={() => setValue(value - 1)} className="flex flex-1 items-center justify-center">
          <Caret className="text-[#222]" />
        </button>
      </div>
    </div>
  );
};

const Sub = ({ base, sub }: { base: string; sub: string }) => (
  <>
    {base} <span className="relative top-1">{sub}</span> =
  </>
);

const Arrow = ({ x1, x2, y }: { x1: number; x2: number; y: number }) => (
  <path d={`M${x1} ${y}H${x2}M${x1} ${y - 6}v8M${x2} ${y - 6}v8M${x1 - 2} ${y + 2}l4-4M${x2 - 2} ${y + 2}l4-4`} stroke="#222" />
);

const SteelDefs = () => (
  <defs>
    <linearGradient id="steel" x1="0" y1="0" x2="0" y2="1">
      <stop offset="0" stopColor="#8c8c8c" />
      <stop offset="1" stopColor="#bdbdbd" />
    </linearGradient>
  </defs>
);

const LeftSketch = () => (
  <svg width="124" height="29" viewBox="0 0 124 29" fill="none" className="bg-white" aria-hidden="true">
    <SteelDefs />
    <path d="M2.500 2H113v20.500H69.500v4H47v-4H2.500z" fill="url(#steel)" />
    <path d="M2.500 2H113M113 22.500H69.500v4H47v-4H2.500" stroke="#111" strokeWidth="1.5" />
    <path d="M2.500 2v20M113 2v20" stroke="#111" strokeDasharray="4 2" />
    <path d="M25 7.500h69" stroke="#e5252a" strokeWidth="2" />
    <Arrow x1={25.5} x2={46.5} y={18.5} />
    <Arrow x1={68.5} x2={93.5} y={18.5} />
    <text x="33" y="16" fontSize="9" fill="#222">l</text>
    <text x="35" y="17" fontSize="7" fill="#222">L</text>
    <text x="79" y="16" fontSize="9" fill="#222">l</text>
    <text x="81" y="17" fontSize="7" fill="#222">R</text>
  </svg>
);

const RightSketch = () => (
  <svg width="124" height="29" viewBox="0 0 124 29" fill="none" className="overflow-visible bg-white" aria-hidden="true">
    <path d="M2 2h109.500v24.500H89v-4H2z" fill="url(#steel)" />
    <path d="M2 2h109.500v24.500H89v-4H2" stroke="#111" strokeWidth="1.5" />
    <path d="M2 2v20" stroke="#111" strokeDasharray="4 2" />
    <path d="M47 7.500h57.500V22" stroke="#e5252a" strokeWidth="2" />
    <Arrow x1={47.5} x2={89.5} y={18.5} />
    <path d="M67.500 9v7M117.500 6v16M114 6.500h7M114 21.500h7M116 8l4-4M116 23l4-4" stroke="#222" />
    <text x="119" y="17" fontSize="11" fill="#222">l</text>
    <text x="121" y="20" fontSize="8" fill="#222">b</text>
  </svg>
);

const BARS = ["13", "10", "16", "19", "22", "25", "29", "32", "36", "43", "57", "8"];

const OpenBarList = () => (
  <div className="relative h-[21px] w-[125px]">
    <select id="left-bar" className="h-full w-full appearance-none border border-[#2a6fa8] bg-linear-to-r from-[#90ee90] from-90% to-[#cfe2f6] to-90% pl-1 text-[#222]">
      {BARS.map((bar) => (
        <option key={bar}>{bar}</option>
      ))}
    </select>
    <ChevronDown size={11} className="pointer-events-none absolute right-0.5 top-[5px] text-[#444]" />
    <ul
      role="listbox"
      aria-label="Bar sizes"
      className="absolute left-0 top-full z-10 grid h-[180px] w-full auto-rows-fr border border-[#2a6fa8] bg-white text-[#222]"
    >
      {BARS.map((bar, i) => (
        <li
          key={bar}
          role="option"
          aria-selected={i === 0}
          className={`flex items-center pl-0.5 leading-none ${i === 0 ? "bg-[#3390f5] text-white" : ""}`}
        >
          {bar}
        </li>
      ))}
    </ul>
    {/* click highlight and pointer */}
    <span className="pointer-events-none absolute -top-3 left-8 z-20 size-[93px] rounded-full bg-[#ff0]/80 blur-[1px]" />
    <span className="pointer-events-none absolute -top-[11px] left-[101px] z-20 size-[45px] rounded-full border-[6px] border-[#f32020]/90 blur-[1px]" />
    <svg width="16" height="26" viewBox="0 0 16 26" className="pointer-events-none absolute left-[77px] top-[34px] z-20" aria-hidden="true">
      <path d="M1 1v20l4.500-4 3 8 4-1.500-3.500-8h6z" fill="#000" />
    </svg>
  </div>
);

type Row = { id: string; label: React.ReactNode; field: React.ReactNode; end?: boolean };

const BarGroup = ({ title, id, sketch, rows }: { title: string; id: string; sketch: React.ReactNode; rows: Row[] }) => (
  <fieldset className="h-[256px] w-[220px] border border-[#dadada] px-[7px]">
    <legend className="-ml-0.5 px-0.5 leading-4">{title}</legend>
    <div className="mt-2.5 flex items-center">
      <span className="flex w-[54px] justify-end pr-3">
        <Check id={`${id}-on`} label={title} on />
      </span>
      {sketch}
    </div>
    <div className="mt-1.5 grid h-[184px] auto-rows-fr">
      {rows.map((row) => (
        <div key={row.id} className="flex items-center">
          <label htmlFor={row.id} className={`mr-2 w-[46px] shrink-0 whitespace-nowrap ${row.end ? "text-right" : ""}`}>
            {row.label}
          </label>
          {row.field}
        </div>
      ))}
    </div>
  </fieldset>
);

/* stirrup positions along each span */
const SPAN_1 = [71, 79, 87, 95, 104, 113, 120, 129, 137, 145, 154, 162, 180, 197, 214, 232, 249, 267, 284, 301, 319, 336, 354, 362, 371, 379, 387, 395, 404, 412, 420, 429, 437, 445];
const SPAN_2 = [494, 503, 512, 520, 529, 538, 546, 553, 563, 571, 588, 606, 624, 642, 659, 677, 695, 713, 731, 739, 749, 756, 765, 773, 782, 790, 799, 807];

const DimLine = ({ y, top, at }: { y: number; top: number; at: number[] }) => (
  <path
    d={`M${at[0] - 3} ${y}H${at[at.length - 1] + 3}` + at.map((x) => `M${x} ${top}V${y + 4}M${x - 3} ${y + 3}l6-6`).join("")}
    stroke="#222"
  />
);

const BeamPreview = () => (
  <svg viewBox="0 0 876 135" fill="none" className="block w-full" role="img" aria-label="Beam elevation">
    <path d="M49.500 32.500H470v52h-20.500v-13H66.500v13h-17z" fill="#d2d2d2" />
    <path d="M470 32.500h358.500v52h-17v-13H491v13h-21z" fill="#c1c1c1" />
    <path d="M449 38h21v46h-20V68h-1z" fill="#d9d9d9" />
    <path d={[...SPAN_1, ...SPAN_2].map((x) => `M${x} 36v31`).join("")} stroke="#858585" strokeWidth="1.5" />
    <path d="M54.500 71V35.500H824M54.500 67.500H824" stroke="#808080" strokeWidth="1.5" />
    <path d="M49.500 84.500v-52h779v52" stroke="#555" />
    <path d="M66.500 84.500v-13h383v13M491 84.500v-13h320.500v13" stroke="#222" />
    <path d="M49.500 84.500h17M449.500 84.500H491M811.500 84.500h17" stroke="#111" strokeDasharray="3 1" />
    <path d="M354 35.500h217M727 35.500h97.500V71" stroke="#ee1c22" strokeWidth="1.5" />
    <DimLine y={21.5} top={18} at={[490.5, 811.5]} />
    <DimLine y={107.5} top={91} at={[49.5, 65.5, 448.5, 490.5, 811.5, 827.5]} />
    <DimLine y={127.5} top={104} at={[57.5, 469.5, 819.5]} />
    <g fontSize="11" fill="#222" textAnchor="middle">
      <text x="650" y="17">3875</text>
      <text x="57" y="103">200</text>
      <text x="256" y="103">4625</text>
      <text x="469" y="103">500</text>
      <text x="650" y="103">3875</text>
      <text x="819" y="103">200</text>
      <text x="263" y="123">4975</text>
      <text x="644" y="123">4225</text>
    </g>
  </svg>
);

const Dialog = () => (
  <section
    role="dialog"
    aria-label="Reinforcement of beams"
    className="absolute left-[198px] right-[196px] top-[76px] border border-[#555] bg-[#efefef] [font-family:'Liberation_Sans',Arial,sans-serif] text-[11px] text-[#222]"
  >
    <div className="flex h-[30px] items-center bg-white pl-2 text-[12px] [font-family:Roboto,sans-serif]">
      <Icon w={16} h={16} stroke="none">
        <path d="m8 0 7 4v8l-7 4-7-4V4z" fill="#3f7fc4" />
        <path d="M5.500 11.500v-7l5 7v-7" stroke="#fff" strokeWidth="1.8" />
      </Icon>
      <h2 className="ml-1">Reinforcement of beams</h2>
      <button aria-label="Close" className="ml-auto mr-1.5">
        <X size={16} strokeWidth={1.25} />
      </button>
    </div>
    <nav className="flex h-6 items-center gap-[18px] bg-[#e4e5e8] pl-3.5 text-[12px] [font-family:Roboto,sans-serif]">
      <button>File</button>
      <button>Help</button>
    </nav>

    <div className="flex gap-2 px-1 pt-1">
      <PageList />
      <div className="min-w-0 flex-1 pt-px">
        <fieldset className="h-[45px] border border-[#dadada] px-[7px]">
          <legend className="-ml-0.5 px-0.5 leading-4">Spans</legend>
          <div className="flex items-center">
            <label htmlFor="span-no" className="w-[102px]">Span no.:</label>
            <Spinner id="span-no" start={2} width="w-[77px]" />
            <span className="ml-2 w-[107px]">Span length:</span>
            <label htmlFor="span-length" className="mr-1.5"><Sub base="l" sub="s" /></label>
            <Field id="span-length" value="3875" disabled />
          </div>
        </fieldset>
        <div className="mt-[5px] flex justify-between">
          <BarGroup
            title="Bar above the left support"
            id="left"
            sketch={<LeftSketch />}
            rows={[
              { id: "left-bar", label: "Bar:", field: <OpenBarList /> },
              { id: "left-phi", label: "ϕ =", end: true, field: <Field id="left-phi" value="13 mm" disabled /> },
              { id: "left-material", label: "Material:", field: <Combo id="left-material" value="" disabled /> },
              { id: "left-hooks", label: "Hooks:", field: <Combo id="left-hooks" value="None" /> },
              { id: "left-n", label: "n =", end: true, field: <Spinner id="left-n" start={1} width="w-[84px]" /> },
              { id: "left-ll", label: <Sub base="l" sub="L" />, end: true, field: <Field id="left-ll" value="1156" /> },
              { id: "left-lr", label: <Sub base="l" sub="R" />, end: true, field: <Field id="left-lr" value="969" /> },
            ]}
          />
          <BarGroup
            title="Bar above the extreme right support"
            id="right"
            sketch={<RightSketch />}
            rows={[
              { id: "right-bar", label: "Bar:", field: <Combo id="right-bar" value="22" /> },
              { id: "right-phi", label: "ϕ =", end: true, field: <Field id="right-phi" value="22 mm" disabled /> },
              { id: "right-material", label: "Material:", field: <Combo id="right-material" value="" disabled /> },
              { id: "right-hooks", label: "Hooks:", field: <Combo id="right-hooks" value="None" /> },
              { id: "right-n", label: "n =", end: true, field: <Spinner id="right-n" start={1} width="w-[84px]" /> },
              { id: "right-l", label: "l =", end: true, field: <Field id="right-l" value="969" /> },
              { id: "right-lb", label: <Sub base="l" sub="b" />, end: true, field: <Field id="right-lb" value="537" /> },
            ]}
          />
        </div>
      </div>
    </div>

    <div className="mx-[3px] mt-[7px] border border-[#555] bg-white">
      <BeamPreview />
    </div>

    <div className="flex h-[49px] items-center px-3">
      <span className="-ml-1.5 flex w-[296px] items-center gap-1">
        <Check id="without" on={false} />
        <label htmlFor="without">Without reinforcement generation</label>
      </span>
      <span className="flex items-center gap-1">
        <Check id="dynamic" on />
        <label htmlFor="dynamic">Dynamic model update</label>
      </span>
      <button className="ml-auto h-[21px] w-[72px] border-2 border-[#1a6fd0] bg-[#e1e1e1] leading-none">OK</button>
      <button className="ml-2 h-[21px] w-[72px] border border-[#adadad] bg-[#e1e1e1] leading-none">Cancel</button>
    </div>
  </section>
);

const App = () => (
  <div className="relative flex h-screen flex-col overflow-hidden bg-[#ececec] [font-family:Roboto,sans-serif]">
    <TitleBar />
    <RibbonTabs />
    <Ribbon />
    <ContextBar />
    <div className="flex min-h-0 flex-1">
      <ProjectBrowser />
      <DrawingArea />
      <PropertiesPalette />
    </div>
    <StatusBar />
    <Dialog />
  </div>
);

export default App;
